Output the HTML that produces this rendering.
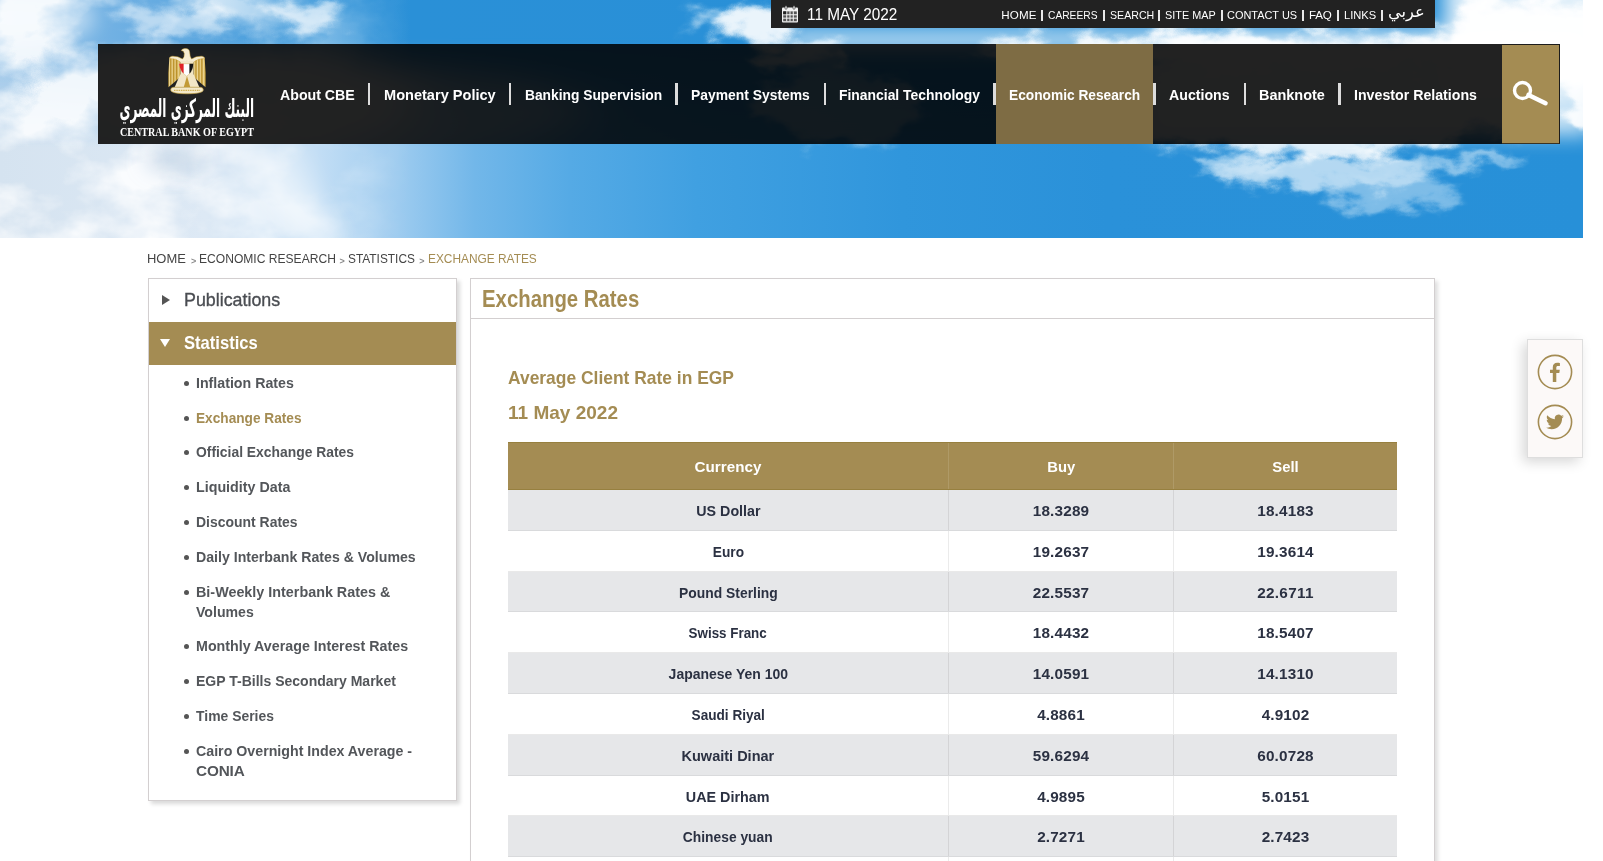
<!DOCTYPE html>
<html lang="en"><head><meta charset="utf-8"><title>Exchange Rates - Central Bank of Egypt</title>
<style>
*{box-sizing:border-box;margin:0;padding:0}
html,body{width:1603px;height:861px;overflow:hidden;background:#fff}
body{position:relative;will-change:transform;font-family:"Liberation Sans", sans-serif;font-size:15px;color:#444;-webkit-font-smoothing:antialiased}
.abs,.t.abs{position:absolute}
.t{white-space:nowrap;display:inline-block}
#sky{position:absolute;left:0;top:0;width:1583px;height:238px;overflow:hidden;background:#2a91d8}
#sky svg{position:absolute;left:0;top:0}
#topbar{position:absolute;left:771px;top:0;width:664px;height:28.3px;background:#222;color:#fff}
#topbar .date{position:absolute;left:36px;top:0;line-height:29px;font-size:16.1px;color:#fff}
#topbar .lk{position:absolute;top:0;line-height:30px;font-size:11.6px;color:#fff}
#topbar .bar{position:absolute;top:10px;width:2px;height:11px;background:#e8e8e8}
#topbar .ar{position:absolute;top:0;line-height:24px;font-size:16.3px;color:#fff;font-family:"DejaVu Sans","Liberation Sans",sans-serif}
#nav{position:absolute;left:98px;top:44px;width:1462px;height:100px;background:rgba(0,0,0,.868);overflow:hidden}
#nav .nv{position:absolute;top:.8px;line-height:100px;font-size:15px;font-weight:700;color:#fff;margin-left:-98px}
#nav .sep{position:absolute;top:39px;width:2.4px;height:22px;background:#dcdcdc;margin-left:-98px}
#nav .active{position:absolute;top:0;height:100px;background:#7e6c44}
#nav .search{position:absolute;left:1404px;top:0;width:58px;height:100px;background:#a48c53;border-top:1px solid #1c1c1c;border-right:1px solid #1c1c1c;border-bottom:1px solid #3a3323}
#logo{position:absolute;left:0;top:0;width:180px;height:100px}
#logo .ar{position:absolute;left:22px;top:49.5px;width:134px;text-align:center;font-family:"DejaVu Sans","Liberation Sans",sans-serif;font-size:12px;font-weight:700;line-height:30px;color:#fff;white-space:nowrap;transform:scaleY(2.1);transform-origin:50% 50%}
#logo .en{position:absolute;left:22px;top:81px;font-family:"Liberation Serif",serif;font-size:13px;font-weight:700;line-height:14.6px;color:#fff;white-space:nowrap;transform:scaleX(.7767);transform-origin:0 50%}
#crumb{position:absolute;left:148px;top:248.5px;height:20px;line-height:20px;font-size:13.5px;color:#444;white-space:nowrap}
#crumb .t{position:absolute;top:0}
#crumb .gt{position:absolute;top:2px;font-size:9px;color:#8a8a8a;font-weight:700}
#crumb .cur{color:#a48c53}
#side{position:absolute;left:148px;top:278px;width:309px;height:523px;background:#fff;border:1px solid #d3cfd0;box-shadow:3px 3px 4px rgba(0,0,0,.15)}
#side .h{position:absolute;left:0;width:307px;height:43px;line-height:41.6px;font-size:19px;font-weight:400;color:#4a4d52;-webkit-text-stroke:.35px #4a4d52}
#side .h .t{position:absolute;left:35px;top:0}
#side .h.on{background:#a48c53;color:#fff;font-weight:700;-webkit-text-stroke:0}
#side .tri-r{position:absolute;left:13px;top:16px;width:0;height:0;border-left:8px solid #555;border-top:5px solid transparent;border-bottom:5px solid transparent}
#side .tri-d{position:absolute;left:11px;top:17px;width:0;height:0;border-top:8px solid #fff;border-left:5.5px solid transparent;border-right:5.5px solid transparent}
#side .li{position:absolute;left:0;width:307px;font-size:15.3px;font-weight:700;line-height:20px;color:#53565a;margin-top:-279px}
#side .li .t{position:absolute;left:47px;top:0;display:block}
#side .li .t2{top:20px}
#side .li .bul{position:absolute;left:35px;top:8px;width:5px;height:5px;border-radius:50%;background:#555}
#side .li.act{color:#a48c53}
#main{position:absolute;left:470px;top:278px;width:965px;height:600px;background:#fff;border:1px solid #d3cfd0;box-shadow:3px 3px 4px rgba(0,0,0,.13)}
#main .hd{position:absolute;left:0;top:0;width:963px;height:40px;border-bottom:1px solid #d3cfd0}
#main h1{position:absolute;left:11px;top:0;line-height:40px;font-size:23.6px;font-weight:700;color:#a48c53}
#main h3{position:absolute;left:37px;font-size:19px;font-weight:700;color:#a48c53;line-height:25px}
#tbl{position:absolute;left:37px;top:0;width:889px}
#tbl .th{position:absolute;left:0;top:163px;width:889px;height:48px;background:#a48c53;border-top:1px solid #97803f;border-bottom:1px solid #97803f;color:#fff;font-weight:700;font-size:15.2px;line-height:47.5px}
#tbl .tr{position:absolute;left:0;width:889px;height:41px;line-height:42.2px;font-size:15.3px;font-weight:700;color:#2b3142;border-bottom:1px solid #e9e9e9;margin-top:-279px;background:#fff}
#tbl .tr.odd{background:#e6e7e9;border-bottom:1px solid #d9dadc}
#tbl .c1,#tbl .c2,#tbl .c3{position:absolute;top:0;height:100%;text-align:center}
#tbl .c1{left:0;width:440px}
#tbl .c2{left:440px;width:225px;border-left:1px solid rgba(0,0,0,.08)}
#tbl .c3{left:665px;width:224px;border-left:1px solid rgba(0,0,0,.08)}
#tbl .th .c2,#tbl .th .c3{border-left:1px solid rgba(255,255,255,.12)}
#social{position:absolute;left:1527px;top:339px;width:56px;height:119px;background:#fcf9f8;border:1px solid #dedede;box-shadow:-4px 4px 12px rgba(0,0,0,.16)}
#social svg{position:absolute;left:9px}

</style></head>
<body>
<div id="sky"><svg width="1583" height="238" viewBox="0 0 1583 238">
<defs>
<linearGradient id="sgt" x1="0" y1="0" x2="1583" y2="0" gradientUnits="userSpaceOnUse"><stop offset="0" stop-color="#8dbfe8"/><stop offset=".1" stop-color="#65abe1"/><stop offset=".2" stop-color="#3f9adb"/><stop offset=".26" stop-color="#2a90d7"/><stop offset="1" stop-color="#2790d8"/></linearGradient>
<linearGradient id="sgb" x1="0" y1="0" x2="1583" y2="0" gradientUnits="userSpaceOnUse"><stop offset="0" stop-color="#d5e3f0"/><stop offset=".13" stop-color="#dde9f5"/><stop offset=".2" stop-color="#c3def5"/><stop offset=".245" stop-color="#a3cef0"/><stop offset=".3" stop-color="#72b7e9"/><stop offset=".36" stop-color="#55aae5"/><stop offset=".44" stop-color="#40a0e1"/><stop offset=".57" stop-color="#3096dc"/><stop offset=".7" stop-color="#2a91d9"/><stop offset="1" stop-color="#2790d8"/></linearGradient>
<linearGradient id="vm" x1="0" y1="0" x2="0" y2="238" gradientUnits="userSpaceOnUse"><stop offset=".16" stop-color="#000"/><stop offset=".62" stop-color="#fff"/></linearGradient>
<linearGradient id="hm" x1="0" y1="0" x2="1583" y2="0" gradientUnits="userSpaceOnUse"><stop offset="0" stop-color="#fff"/><stop offset=".11" stop-color="#fff"/><stop offset=".26" stop-color="#000"/></linearGradient>
<mask id="mk"><rect width="1583" height="238" fill="url(#vm)"/></mask>
<mask id="mh"><rect width="1583" height="238" fill="url(#hm)"/></mask>
<clipPath id="cn"><rect x="98" y="44" width="1470" height="100"/></clipPath>
<filter id="tx" x="0" y="0" width="100%" height="100%"><feTurbulence type="fractalNoise" baseFrequency=".011 .016" numOctaves="5" seed="11"/><feColorMatrix type="matrix" values="0 0 0 0 1  0 0 0 0 1  0 0 0 0 1  3.4 0 0 0 -1.25"/></filter>
<filter id="cl" x="-10%" y="-30%" width="120%" height="160%"><feGaussianBlur in="SourceGraphic" stdDeviation="5" result="b"/><feTurbulence type="fractalNoise" baseFrequency=".02 .035" numOctaves="4" seed="7" result="n"/><feDisplacementMap in="b" in2="n" scale="50" xChannelSelector="R" yChannelSelector="G"/></filter>
<filter id="cl2" x="-10%" y="-30%" width="120%" height="160%"><feGaussianBlur in="SourceGraphic" stdDeviation="4" result="b"/><feTurbulence type="fractalNoise" baseFrequency=".03 .05" numOctaves="4" seed="3" result="n"/><feDisplacementMap in="b" in2="n" scale="40" xChannelSelector="R" yChannelSelector="G"/></filter>
<filter id="bw" x="-30%" y="-30%" width="160%" height="160%"><feGaussianBlur stdDeviation="28 14"/></filter>
<filter id="b3" x="-20%" y="-20%" width="140%" height="140%"><feGaussianBlur stdDeviation="10"/></filter>
</defs>
<rect width="1583" height="238" fill="url(#sgt)"/>
<rect width="1583" height="238" fill="url(#sgb)" mask="url(#mk)"/>
<g mask="url(#mh)"><rect width="420" height="238" filter="url(#tx)" opacity=".85"/></g>
<g fill="#fff" filter="url(#b3)"><ellipse cx="15" cy="18" rx="80" ry="30" opacity=".5"/><rect x="790" y="30" width="800" height="20" opacity=".7"/><rect x="1150" y="40" width="440" height="95" opacity=".75"/><rect x="1445" y="-20" width="160" height="110" opacity=".85"/></g>
<g clip-path="url(#cn)"><g fill="#fff" filter="url(#bw)"><ellipse cx="190" cy="100" rx="230" ry="60" opacity=".85"/><ellipse cx="350" cy="110" rx="240" ry="45" opacity=".45"/></g></g>
<g fill="#fff" filter="url(#cl)">
<ellipse cx="175" cy="20" rx="55" ry="14" opacity=".55"/>
<ellipse cx="300" cy="18" rx="45" ry="13" opacity=".7"/>
<ellipse cx="755" cy="26" rx="42" ry="16" opacity=".9"/>
<ellipse cx="700" cy="18" rx="14" ry="6" opacity=".6"/>
<ellipse cx="800" cy="55" rx="45" ry="14" opacity=".7"/>
<ellipse cx="1270" cy="50" rx="300" ry="16" opacity=".92"/>
<ellipse cx="1540" cy="40" rx="90" ry="46" opacity=".95"/>
<ellipse cx="1590" cy="90" rx="28" ry="40" opacity=".9"/>
<ellipse cx="840" cy="105" rx="90" ry="35" opacity=".4"/>
<ellipse cx="1320" cy="105" rx="220" ry="50" opacity=".85"/>
</g>
<g fill="#fff" filter="url(#cl2)">
<ellipse cx="1330" cy="172" rx="110" ry="16" opacity=".65"/>
<ellipse cx="1390" cy="195" rx="70" ry="14" opacity=".4"/>
<ellipse cx="1240" cy="160" rx="50" ry="8" opacity=".5"/>
<ellipse cx="1470" cy="160" rx="50" ry="7" opacity=".5"/>
</g>
<g filter="url(#b3)"><path d="M225 145 L262 145 L345 238 L300 238z" fill="#fff" opacity=".55"/><path d="M262 145 L300 145 L340 238 L345 238z" fill="#fff" opacity=".3"/>
<ellipse cx="175" cy="160" rx="30" ry="12" fill="#9db9d6" opacity=".5"/></g>
</svg>
</div>
<div id="topbar">
<svg class="abs" style="left:9.700px;top:4.600px" width="18" height="18.500" viewBox="0 0 18 18" preserveAspectRatio="none"><rect x="1" y="2.5" width="16" height="14.5" rx="1" fill="#f2f2f2"/><rect x="2.2" y="6.2" width="13.6" height="9.6" fill="#555"/><g fill="#f2f2f2"><rect x="5.2" y="6" width="1" height="10"/><rect x="8.5" y="6" width="1" height="10"/><rect x="11.8" y="6" width="1" height="10"/><rect x="2" y="9" width="14" height="1"/><rect x="2" y="12.3" width="14" height="1"/></g><rect x="2.2" y="6.2" width="3" height="2.8" fill="#222"/><rect x="4" y="0.8" width="2" height="3.4" rx="1" fill="#f2f2f2" stroke="#222" stroke-width=".6"/><rect x="12" y="0.8" width="2" height="3.4" rx="1" fill="#f2f2f2" stroke="#222" stroke-width=".6"/></svg>
<span class="date t" style="transform:scaleX(0.9531);transform-origin:0 50%;">11 MAY 2022</span>
<a class="lk t" style="letter-spacing:0.106px;left:230.3px">HOME</a>
<a class="lk t" style="transform:scaleX(0.8829);transform-origin:0 50%;left:277.4px">CAREERS</a>
<a class="lk t" style="transform:scaleX(0.9146);transform-origin:0 50%;left:338.5px">SEARCH</a>
<a class="lk t" style="transform:scaleX(0.9367);transform-origin:0 50%;left:394.2px">SITE MAP</a>
<a class="lk t" style="transform:scaleX(0.9435);transform-origin:0 50%;left:456.4px">CONTACT US</a>
<a class="lk t" style="letter-spacing:-0.152px;left:538.0px">FAQ</a>
<a class="lk t" style="transform:scaleX(0.9607);transform-origin:0 50%;left:572.8px">LINKS</a>
<i class="bar" style="left:270.0px"></i>
<i class="bar" style="left:331.8px"></i>
<i class="bar" style="left:387.4px"></i>
<i class="bar" style="left:449.7px"></i>
<i class="bar" style="left:531.2px"></i>
<i class="bar" style="left:565.8px"></i>
<i class="bar" style="left:609.9px"></i>
<a class="ar" dir="rtl" lang="ar" style="left:617px">عربي</a>

</div>
<div id="nav">
<div id="logo">
<svg class="abs" style="left:62px;top:0" width="54" height="54" viewBox="0 0 54 54">
<defs><linearGradient id="wg" x1="0" y1="0" x2="1" y2="0"><stop offset="0" stop-color="#c9a033"/><stop offset=".1" stop-color="#ecd48e"/><stop offset=".2" stop-color="#b88d24"/><stop offset=".32" stop-color="#efd998"/><stop offset=".44" stop-color="#b88d24"/><stop offset=".56" stop-color="#ecd48e"/><stop offset=".68" stop-color="#b88d24"/><stop offset=".82" stop-color="#ecd48e"/><stop offset="1" stop-color="#c39a2c"/></linearGradient></defs>
<path d="M9.300 14.300 Q9 13.200 10.400 13 L17 13.600 L20.500 17.800 L20.500 33 L8.400 43.200 Q7.900 30 9.300 14.300z" fill="url(#wg)"/>
<path d="M44.700 14.300 Q45 13.200 43.600 13 L37 13.600 L33.500 17.800 L33.500 33 L45.600 43.200 Q46.100 30 44.700 14.300z" fill="url(#wg)"/>
<path d="M9.600 14.600 Q9.600 12.400 12 12.200 Q18 11.800 22.500 15 Q24.600 13.500 24.300 9.500 Q24 6.800 21.300 6.600 Q21.600 5 24.500 4.600 Q29.300 4 29.700 8.500 Q29.800 13 31.500 15 Q36 11.800 42 12.200 Q44.400 12.400 44.400 14.600 Q38 14.200 33.500 18.200 L27 17.300 L20.500 18.200 Q16 14.200 9.600 14.600z" fill="#f6ecd0" stroke="#caa23a" stroke-width=".5"/>
<path d="M20.500 17 L33.500 17 L33.500 30 L39.500 43.400 L14.500 43.400 L20.500 30z" fill="#f2e6c6"/>
<path d="M27 32 L23.800 43 L30.200 43z" fill="#c29a35"/>
<path d="M10.700 46 Q10.700 43.200 14 43.200 L40 43.200 Q43.300 43.200 43.300 46 Q43 49.800 27 49.800 Q11 49.800 10.700 46z" fill="#f4e9c9" stroke="#caa23a" stroke-width=".6"/>
<path d="M14 46.400 H40" stroke="#d3b257" stroke-width="1.200" stroke-dasharray="1.500 .8"/>
<path d="M19.100 19.700 H33.300 Q33.300 27.500 26.700 32.200 Q19.800 27.500 19.100 19.700z" fill="#fff" stroke="#c9a545" stroke-width=".4"/>
<path d="M19.100 19.700 H23.600 V29.600 Q19.800 26 19.100 19.700z" fill="#e02225"/>
<path d="M33.300 19.700 H29.400 V29.800 Q33 26 33.300 19.700z" fill="#151515"/>
</svg>

<div class="ar" dir="rtl" lang="ar">البنك المركزي المصري</div>
<div class="en">CENTRAL BANK OF EGYPT</div>
</div>
<div class="active" style="left:898px;width:157px"></div>
<a class="nv t" style="transform:scaleX(0.9450);transform-origin:0 50%;left:280.30px">About CBE</a>
<a class="nv t" style="transform:scaleX(0.9709);transform-origin:0 50%;left:383.80px">Monetary Policy</a>
<a class="nv t" style="transform:scaleX(0.9189);transform-origin:0 50%;left:524.70px">Banking Supervision</a>
<a class="nv t" style="transform:scaleX(0.9252);transform-origin:0 50%;left:691.00px">Payment Systems</a>
<a class="nv t" style="transform:scaleX(0.9261);transform-origin:0 50%;left:838.80px">Financial Technology</a>
<a class="nv t" style="transform:scaleX(0.9149);transform-origin:0 50%;left:1008.80px">Economic Research</a>
<a class="nv t" style="transform:scaleX(0.9443);transform-origin:0 50%;left:1169.20px">Auctions</a>
<a class="nv t" style="transform:scaleX(0.9642);transform-origin:0 50%;left:1258.80px">Banknote</a>
<a class="nv t" style="transform:scaleX(0.9458);transform-origin:0 50%;left:1353.90px">Investor Relations</a>
<i class="sep" style="left:367.80px"></i>
<i class="sep" style="left:508.70px"></i>
<i class="sep" style="left:675.40px"></i>
<i class="sep" style="left:823.60px"></i>
<i class="sep" style="left:993.30px"></i>
<i class="sep" style="left:1153.40px"></i>
<i class="sep" style="left:1243.60px"></i>
<i class="sep" style="left:1338.40px"></i>

<div class="search"><svg class="abs" style="left:8px;top:34px" width="42" height="30" viewBox="0 0 42 30"><circle cx="12.5" cy="11.5" r="8" fill="none" stroke="#fff" stroke-width="3.4"/><path d="M18.5 16 L35.5 24.2" stroke="#fff" stroke-width="4.6" stroke-linecap="round"/></svg></div>
</div>
<div id="crumb"><span class="t" style="transform:scaleX(0.9580);transform-origin:0 50%;left:-0.7px">HOME</span>
<span class="t" style="transform:scaleX(0.8947);transform-origin:0 50%;left:51.1px">ECONOMIC RESEARCH</span>
<span class="t" style="transform:scaleX(0.8801);transform-origin:0 50%;left:200.2px">STATISTICS</span>
<span class="t cur" style="transform:scaleX(0.8807);transform-origin:0 50%;left:279.6px">EXCHANGE RATES</span>
<span class="gt" style="left:43.0px">&gt;</span>
<span class="gt" style="left:191.6px">&gt;</span>
<span class="gt" style="left:271.3px">&gt;</span>
</div>
<div id="side">
<div class="h" style="top:0"><i class="tri-r"></i><span class="t" style="transform:scaleX(0.9390);transform-origin:0 50%;">Publications</span></div>
<div class="h on" style="top:43px"><i class="tri-d"></i><span class="t" style="transform:scaleX(0.8735);transform-origin:0 50%;">Statistics</span></div>
<div class="li" style="top:372.85px"><b class="bul"></b><span class="t" style="transform:scaleX(0.9285);transform-origin:0 50%;">Inflation Rates</span></div>
<div class="li act" style="top:407.65px"><b class="bul"></b><span class="t" style="transform:scaleX(0.8928);transform-origin:0 50%;">Exchange Rates</span></div>
<div class="li" style="top:442.45px"><b class="bul"></b><span class="t" style="transform:scaleX(0.9064);transform-origin:0 50%;">Official Exchange Rates</span></div>
<div class="li" style="top:477.25px"><b class="bul"></b><span class="t" style="transform:scaleX(0.9326);transform-origin:0 50%;">Liquidity Data</span></div>
<div class="li" style="top:512.05px"><b class="bul"></b><span class="t" style="transform:scaleX(0.9124);transform-origin:0 50%;">Discount Rates</span></div>
<div class="li" style="top:546.85px"><b class="bul"></b><span class="t" style="transform:scaleX(0.9242);transform-origin:0 50%;">Daily Interbank Rates &amp; Volumes</span></div>
<div class="li" style="top:581.65px"><b class="bul"></b><span class="t" style="transform:scaleX(0.9380);transform-origin:0 50%;">Bi-Weekly Interbank Rates &amp;</span><span class="t t2" style="transform:scaleX(0.9226);transform-origin:0 50%;">Volumes</span></div>
<div class="li" style="top:636.45px"><b class="bul"></b><span class="t" style="transform:scaleX(0.9320);transform-origin:0 50%;">Monthly Average Interest Rates</span></div>
<div class="li" style="top:671.25px"><b class="bul"></b><span class="t" style="transform:scaleX(0.9159);transform-origin:0 50%;">EGP T-Bills Secondary Market</span></div>
<div class="li" style="top:706.05px"><b class="bul"></b><span class="t" style="transform:scaleX(0.9106);transform-origin:0 50%;">Time Series</span></div>
<div class="li" style="top:740.85px"><b class="bul"></b><span class="t" style="transform:scaleX(0.9289);transform-origin:0 50%;">Cairo Overnight Index Average -</span><span class="t t2" style="letter-spacing:-0.145px">CONIA</span></div>

</div>
<div id="main">
<div class="hd"><h1 class="t" style="transform:scaleX(0.8624);transform-origin:0 50%;">Exchange Rates</h1></div>
<h3 class="t" style="transform:scaleX(0.9173);transform-origin:0 50%;top:86px">Average Client Rate in EGP</h3>
<h3 class="t" style="letter-spacing:0.013px;top:121px">11 May 2022</h3>
<div id="tbl">
<div class="th"><div class="c1"><span class="t c" style="letter-spacing:0.045px">Currency</span></div><div class="c2"><span class="t c" style="transform:scaleX(0.9755);transform-origin:50% 50%;">Buy</span></div><div class="c3"><span class="t c" style="transform:scaleX(0.9766);transform-origin:50% 50%;">Sell</span></div></div>
<div class="tr odd" style="top:490px;height:41px"><div class="c1"><span class="t c" style="transform:scaleX(0.9330);transform-origin:50% 50%;">US Dollar</span></div><div class="c2"><span class="t c" style="letter-spacing:0.171px">18.3289</span></div><div class="c3"><span class="t c" style="letter-spacing:0.171px">18.4183</span></div></div>
<div class="tr" style="top:531px;height:41px"><div class="c1"><span class="t c" style="transform:scaleX(0.8941);transform-origin:50% 50%;">Euro</span></div><div class="c2"><span class="t c" style="letter-spacing:0.171px">19.2637</span></div><div class="c3"><span class="t c" style="letter-spacing:0.171px">19.3614</span></div></div>
<div class="tr odd" style="top:572px;height:40px"><div class="c1"><span class="t c" style="transform:scaleX(0.9060);transform-origin:50% 50%;">Pound Sterling</span></div><div class="c2"><span class="t c" style="letter-spacing:0.171px">22.5537</span></div><div class="c3"><span class="t c" style="letter-spacing:0.312px">22.6711</span></div></div>
<div class="tr" style="top:612px;height:41px"><div class="c1"><span class="t c" style="transform:scaleX(0.8751);transform-origin:50% 50%;">Swiss Franc</span></div><div class="c2"><span class="t c" style="letter-spacing:0.171px">18.4432</span></div><div class="c3"><span class="t c" style="letter-spacing:0.171px">18.5407</span></div></div>
<div class="tr odd" style="top:653px;height:41px"><div class="c1"><span class="t c" style="transform:scaleX(0.9140);transform-origin:50% 50%;">Japanese Yen 100</span></div><div class="c2"><span class="t c" style="letter-spacing:0.171px">14.0591</span></div><div class="c3"><span class="t c" style="letter-spacing:0.171px">14.1310</span></div></div>
<div class="tr" style="top:694px;height:41px"><div class="c1"><span class="t c" style="transform:scaleX(0.8893);transform-origin:50% 50%;">Saudi Riyal</span></div><div class="c2"><span class="t c" style="letter-spacing:0.147px">4.8861</span></div><div class="c3"><span class="t c" style="letter-spacing:0.147px">4.9102</span></div></div>
<div class="tr odd" style="top:735px;height:41px"><div class="c1"><span class="t c" style="transform:scaleX(0.9483);transform-origin:50% 50%;">Kuwaiti Dinar</span></div><div class="c2"><span class="t c" style="letter-spacing:0.171px">59.6294</span></div><div class="c3"><span class="t c" style="letter-spacing:0.171px">60.0728</span></div></div>
<div class="tr" style="top:776px;height:40px"><div class="c1"><span class="t c" style="transform:scaleX(0.9379);transform-origin:50% 50%;">UAE Dirham</span></div><div class="c2"><span class="t c" style="letter-spacing:0.147px">4.9895</span></div><div class="c3"><span class="t c" style="letter-spacing:0.147px">5.0151</span></div></div>
<div class="tr odd" style="top:816px;height:41px"><div class="c1"><span class="t c" style="transform:scaleX(0.9035);transform-origin:50% 50%;">Chinese yuan</span></div><div class="c2"><span class="t c" style="letter-spacing:0.147px">2.7271</span></div><div class="c3"><span class="t c" style="letter-spacing:0.147px">2.7423</span></div></div>
<div class="tr" style="top:857px;height:41px"><div class="c1"><span class="t c" style="letter-spacing:0.000px"></span></div><div class="c2"><span class="t c" style="letter-spacing:0.000px"></span></div><div class="c3"><span class="t c" style="letter-spacing:0.000px"></span></div></div>

</div>
</div>
<div id="social">
<svg style="top:13.800px" width="36" height="36" viewBox="0 0 36 36"><circle cx="18" cy="18" r="16.6" fill="none" stroke="#a48c53" stroke-width="1.6"/><path d="M19.3 28V19h3l.5-3.3h-3.5v-2.1c0-1 .4-1.7 1.8-1.7h1.8V9c-.4-.1-1.500-.2-2.700-.2-2.700 0-4.400 1.600-4.400 4.500v2.400h-2.800V19h2.800v9z" fill="#a48c53"/></svg>
<svg style="top:63.800px" width="36" height="36" viewBox="0 0 36 36"><circle cx="18" cy="18" r="16.6" fill="none" stroke="#a48c53" stroke-width="1.6"/><path d="M27 12.300c-.7.300-1.400.500-2.100.600.800-.500 1.300-1.200 1.600-2-.7.400-1.500.700-2.300.900a3.700 3.700 0 0 0-6.300 3.400c-3-.200-5.800-1.600-7.600-3.900-1 1.700-.500 3.800 1.100 4.900-.6 0-1.200-.200-1.700-.500 0 1.800 1.300 3.300 3 3.700-.500.100-1.100.200-1.700.100.500 1.500 1.900 2.500 3.400 2.600a7.400 7.400 0 0 1-5.400 1.500c1.600 1 3.600 1.700 5.600 1.700 6.800 0 10.500-5.600 10.500-10.500v-.500c.700-.500 1.400-1.200 1.900-2z" fill="#a48c53"/></svg>
</div>

</body></html>
